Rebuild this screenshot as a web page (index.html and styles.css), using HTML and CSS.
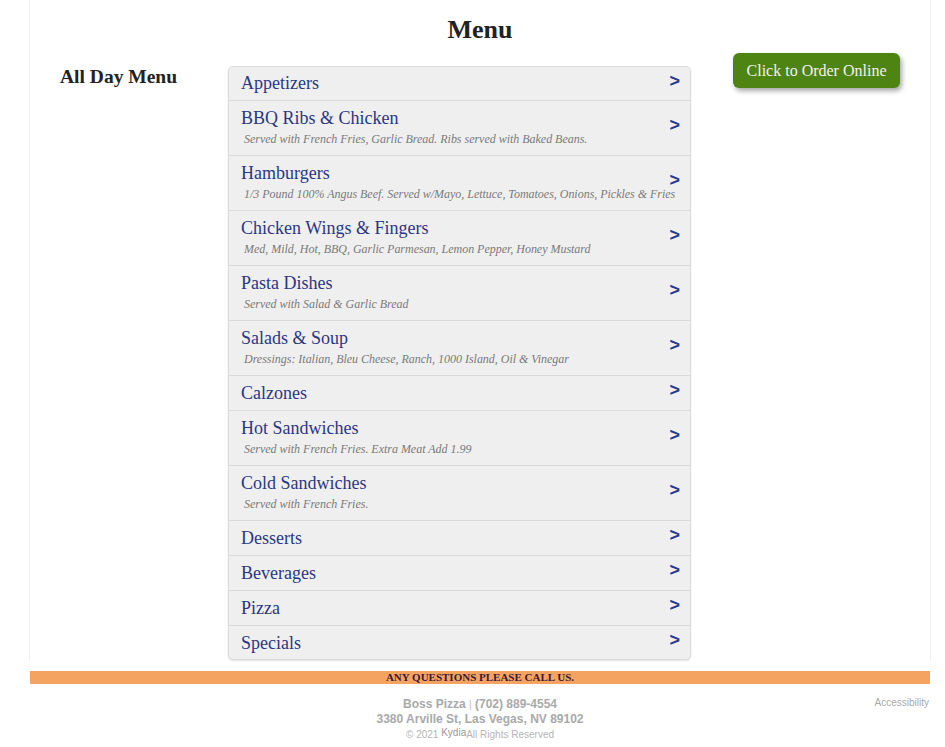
FILE: index.html
```html
<!DOCTYPE html>
<html>
<head>
<meta charset="utf-8">
<title>Menu - Boss Pizza</title>
<link rel="stylesheet" href="styles.css">
</head>
<body>
<div class="page">
  <h1 class="title">Menu</h1>
  <div class="main">
    <div class="side">
      <h2 class="side-title">All Day Menu</h2>
    </div>
    <ul class="menu-list">
      <li class="item"><div class="name">Appetizers</div><span class="arrow">&gt;</span></li>
      <li class="item"><div class="name">BBQ Ribs &amp; Chicken</div><div class="desc">Served with French Fries, Garlic Bread. Ribs served with Baked Beans.</div><span class="arrow">&gt;</span></li>
      <li class="item"><div class="name">Hamburgers</div><div class="desc">1/3 Pound 100% Angus Beef. Served w/Mayo, Lettuce, Tomatoes, Onions, Pickles &amp; Fries</div><span class="arrow">&gt;</span></li>
      <li class="item"><div class="name">Chicken Wings &amp; Fingers</div><div class="desc">Med, Mild, Hot, BBQ, Garlic Parmesan, Lemon Pepper, Honey Mustard</div><span class="arrow">&gt;</span></li>
      <li class="item"><div class="name">Pasta Dishes</div><div class="desc">Served with Salad &amp; Garlic Bread</div><span class="arrow">&gt;</span></li>
      <li class="item"><div class="name">Salads &amp; Soup</div><div class="desc">Dressings: Italian, Bleu Cheese, Ranch, 1000 Island, Oil &amp; Vinegar</div><span class="arrow">&gt;</span></li>
      <li class="item"><div class="name">Calzones</div><span class="arrow">&gt;</span></li>
      <li class="item"><div class="name">Hot Sandwiches</div><div class="desc">Served with French Fries. Extra Meat Add 1.99</div><span class="arrow">&gt;</span></li>
      <li class="item"><div class="name">Cold Sandwiches</div><div class="desc">Served with French Fries.</div><span class="arrow">&gt;</span></li>
      <li class="item"><div class="name">Desserts</div><span class="arrow">&gt;</span></li>
      <li class="item"><div class="name">Beverages</div><span class="arrow">&gt;</span></li>
      <li class="item"><div class="name">Pizza</div><span class="arrow">&gt;</span></li>
      <li class="item"><div class="name">Specials</div><span class="arrow">&gt;</span></li>
    </ul>
    <div class="order">
      <a class="order-btn" href="#">Click to Order Online</a>
    </div>
  </div>
</div>
<div class="call-bar">ANY QUESTIONS PLEASE CALL US.</div>
<footer class="footer">
  <div class="footer-spacer"></div>
  <div class="footer-info">
    <div class="footer-line"><b>Boss Pizza</b> <span class="sep">|</span> <b>(702) 889-4554</b></div>
    <div class="footer-line"><b>3380 Arville St, Las Vegas, NV 89102</b></div>
    <div class="footer-copy">© 2021 <span class="kydia">Kydia</span>All Rights Reserved</div>
  </div>
  <div class="footer-acc"><a href="#">Accessibility</a></div>
</footer>
</body>
</html>
```

FILE: styles.css
```css
html, body {
  margin: 0;
  padding: 0;
  background: #ffffff;
}

body {
  font-family: "Liberation Serif", "Times New Roman", serif;
  color: #222;
}

.page {
  margin-left: 29px;
  width: 900px;
  border-left: 1px solid #f0f0f0;
  border-right: 1px solid #f0f0f0;
  padding-bottom: 1px;
}

.title {
  margin: 0;
  padding-top: 13px;
  font-size: 26px;
  line-height: 34px;
  font-weight: bold;
  text-align: center;
  color: #222;
}

.main {
  display: flex;
  align-items: flex-start;
  margin-top: 6px;
}

.side {
  width: 168px;
  padding-left: 30px;
  padding-top: 13px;
}

.side-title {
  margin: 0;
  font-size: 19.5px;
  line-height: 22px;
  font-weight: bold;
  color: #222;
}

.menu-list {
  list-style: none;
  margin: 13px 0 0 0;
  padding: 0;
  width: 461px;
  background: #efefef;
  border: 1px solid #dcdcdc;
  border-radius: 5px;
  box-shadow: 0 1px 2px rgba(0,0,0,0.12);
}

.item {
  position: relative;
  padding: 6px 10px 6px 12px;
  border-top: 1px solid #dadada;
}

.item:first-child {
  border-top: none;
  padding-top: 5px;
}

.item:last-child {
  padding-bottom: 5px;
}

.name {
  font-size: 18px;
  line-height: 22px;
  color: #2b3784;
}

.desc {
  font-size: 12px;
  line-height: 20px;
  font-style: italic;
  color: #7a7a7a;
  padding-left: 3px;
  white-space: nowrap;
  letter-spacing: -0.02px;
}

.arrow {
  position: absolute;
  right: 10px;
  top: 50%;
  transform: translateY(-50%);
  margin-top: -3px;
  font-family: "Liberation Sans", Arial, sans-serif;
  font-weight: bold;
  font-size: 18px;
  line-height: 18px;
  color: #2a3890;
}

.order {
  flex: 1;
  padding-left: 42px;
}

.order-btn {
  display: inline-block;
  width: 167px;
  height: 35px;
  box-sizing: border-box;
  line-height: 35px;
  text-align: center;
  font-size: 16px;
  color: #f2f2f2;
  text-decoration: none;
  background: #4e8411;
  border-radius: 6px;
  box-shadow: 2px 3px 5px rgba(0,0,0,0.35);
}

.call-bar {
  margin: 10px 0 0 30px;
  width: 900px;
  background: #f4a460;
  font-size: 11px;
  line-height: 13px;
  font-weight: bold;
  text-align: center;
  color: #3a1838;
}

.footer {
  display: grid;
  grid-template-columns: 1fr auto 1fr;
  margin-left: 30px;
  width: 900px;
  font-family: "Liberation Sans", Arial, sans-serif;
  color: #a9a9a9;
}

.footer-info {
  padding-top: 13px;
  text-align: center;
}

.footer-line {
  font-size: 12px;
  line-height: 14px;
}

.sep {
  font-size: 10px;
  color: #bbb;
}

.footer-copy {
  margin-top: 2px;
  font-size: 10px;
  line-height: 14px;
  color: #b5b5b5;
}

.kydia {
  position: relative;
  top: -2px;
  color: #9a9a9a;
}

.footer-acc {
  justify-self: end;
  padding-top: 13px;
  font-size: 10px;
  line-height: 12px;
}

.footer-acc a {
  color: #a9a9a9;
  text-decoration: none;
  margin-right: 1px;
}
```
